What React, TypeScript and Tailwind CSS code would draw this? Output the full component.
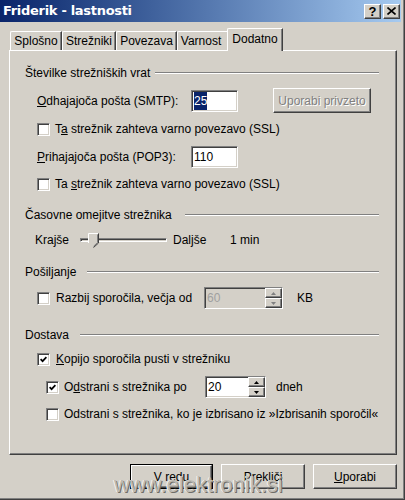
import React from "react";

const raised =
  "border border-t-white border-l-white border-r-[#404040] border-b-[#404040] shadow-[inset_-1px_-1px_0_#808080] bg-[#d4d0c8]";
const sunken =
  "border border-t-[#808080] border-l-[#808080] border-r-white border-b-white shadow-[inset_1px_1px_0_#404040,inset_-1px_-1px_0_#d4d0c8]";
const disabledText = "text-[#808080] [text-shadow:1px_1px_0_#ffffff]";

function Check({ checked }: { checked?: boolean }) {
  return (
    <span className={`w-[13px] h-[13px] shrink-0 bg-white flex items-center justify-center ${sunken}`}>
      {checked && (
        <svg width="7" height="7" viewBox="0 0 7 7">
          <polyline points="0.6,3.2 2.6,5.2 6.4,1.2" fill="none" stroke="#000" strokeWidth="1.7" />
        </svg>
      )}
    </span>
  );
}

function Arrow({ up, grey }: { up?: boolean; grey?: boolean }) {
  return (
    <svg width="5" height="3" viewBox="0 0 5 3">
      <polygon points={up ? "0,3 5,3 2.5,0" : "0,0 5,0 2.5,3"} fill={grey ? "#808080" : "#000"} />
    </svg>
  );
}

function Spin({ value, disabled, className }: { value: string; disabled?: boolean; className: string }) {
  return (
    <div className={`h-[22px] flex ${sunken} ${disabled ? "bg-[#d4d0c8]" : "bg-white"} ${className}`}>
      <span className={`flex-1 pl-[2px] flex items-center ${disabled ? "text-[#a0a0a0]" : ""}`}>{value}</span>
      <div className="w-[17px] flex flex-col">
        <span className={`flex-1 flex items-center justify-center ${raised}`}>
          <Arrow up grey={disabled} />
        </span>
        <span className={`flex-1 flex items-center justify-center ${raised}`}>
          <Arrow grey={disabled} />
        </span>
      </div>
    </div>
  );
}

function Group({ label, className }: { label: string; className: string }) {
  return (
    <div className="h-[20px] flex items-center">
      <div className={`whitespace-nowrap ${className}`}>{label}</div>
      <div className="flex-1 h-[2px] border-t border-t-[#808080] border-b border-b-white" />
    </div>
  );
}

export default function App() {
  return (
    <div className="w-[405px] h-[500px] bg-[#404040] pr-px pb-px relative overflow-hidden font-['Liberation_Sans',Arial,sans-serif] text-[12px] text-black">
      <div className="h-full bg-[#808080] pr-px pb-px">
        <div className="h-full bg-[#d4d0c8] pr-[2px] flex flex-col">
          {/* title bar */}
          <div className="h-[22px] flex items-center bg-linear-to-r from-[#0a246a] to-[#a6caf0] pl-[3px] pr-px">
            <span className="flex-1 text-white font-bold text-[13px] font-['DejaVu_Sans',sans-serif] tracking-[-0.3px]">
              Friderik - lastnosti
            </span>
            <span className={`w-[17px] h-[15px] flex items-center justify-center font-bold text-[13px] leading-none ${raised}`}>
              ?
            </span>
            <span className={`w-[17px] h-[15px] ml-[2px] flex items-center justify-center ${raised}`}>
              <svg width="9" height="8" viewBox="0 0 9 8">
                <path d="M0.5 0.5 L8.5 7.5 M8.5 0.5 L0.5 7.5" stroke="#000" strokeWidth="1.6" />
              </svg>
            </span>
          </div>

          {/* tabs */}
          <div className="mt-[6px] h-[22px] flex items-end pl-[10px]">
            <div className="w-[52px] h-[19px] flex items-center justify-center border-t border-l border-t-white border-l-white border-r border-r-[#404040] shadow-[inset_-1px_0_0_#808080] rounded-tl-[2px]">
              Splošno
            </div>
            <div className="w-[54px] h-[19px] flex items-center justify-center border-t border-l border-t-white border-l-white border-r border-r-[#404040] shadow-[inset_-1px_0_0_#808080] rounded-tl-[2px]">
              Strežniki
            </div>
            <div className="w-[61px] h-[19px] flex items-center justify-center border-t border-l border-t-white border-l-white border-r border-r-[#404040] shadow-[inset_-1px_0_0_#808080] rounded-tl-[2px]">
              Povezava
            </div>
            <div className="w-[52px] h-[19px] flex items-center justify-center border-t border-l border-t-white border-l-white border-r border-r-[#404040] shadow-[inset_-1px_0_0_#808080] rounded-tl-[2px] pr-[4px]">
              Varnost
            </div>
            <div className="relative z-10 w-[56px] -mx-[2px] h-[23px] -mb-px bg-[#d4d0c8] flex items-center justify-center pb-[2px] border-t border-l border-t-white border-l-white border-r border-r-[#404040] shadow-[inset_-1px_0_0_#808080] rounded-tl-[2px]">
              Dodatno
            </div>
          </div>

          {/* panel */}
          <div className="ml-[9px] w-[388px] h-[405px] border border-t-white border-l-white border-r-[#404040] border-b-[#404040] shadow-[inset_-1px_-1px_0_#808080] flex flex-col pt-[12px] pl-[15px] pr-[17px]">
            <Group label="Številke strežniških vrat" className="w-[130px]" />

            <div className="mt-[5px] h-[25px] flex items-center pl-[12px]">
              <span className="w-[154px] whitespace-nowrap">
                <span className="underline">O</span>dhajajoča pošta (SMTP):
              </span>
              <span className={`w-[47px] h-[22px] bg-white flex items-center pl-[2px] ${sunken}`}>
                <span className="bg-[#0a246a] text-white">25</span>
              </span>
              <span className={`ml-[35px] w-[98px] h-[25px] flex items-center justify-center ${raised} ${disabledText}`}>
                Uporabi privzeto
              </span>
            </div>

            <div className="mt-[7px] h-[18px] flex items-center pl-[12px] gap-[5px]">
              <Check />
              <span className="whitespace-nowrap">
                T<span className="underline">a</span> strežnik zahteva varno povezavo (SSL)
              </span>
            </div>

            <div className="mt-[8px] h-[22px] flex items-center pl-[12px]">
              <span className="w-[154px] whitespace-nowrap">
                <span className="underline">P</span>rihajajoča pošta (POP3):
              </span>
              <span className={`w-[47px] h-[22px] bg-white flex items-center pl-[2px] ${sunken}`}>110</span>
            </div>

            <div className="mt-[7px] h-[18px] flex items-center pl-[12px] gap-[5px]">
              <Check />
              <span className="whitespace-nowrap">
                Ta <span className="underline">s</span>trežnik zahteva varno povezavo (SSL)
              </span>
            </div>

            <div className="mt-[12px]">
              <Group label="Časovne omejitve strežnika" className="w-[160px]" />
            </div>

            <div className="mt-[5px] h-[20px] flex items-center pl-[10px]">
              <span className="w-[45px]">Krajše</span>
              <div className="relative w-[87px] h-[20px] flex items-center">
                <div className={`w-full h-[4px] bg-[#d4d0c8] ${sunken}`} />
                <svg className="absolute left-[8px] top-[3px]" width="11" height="15" viewBox="0 0 11 15">
                  <polygon points="0.5,0.5 10.5,0.5 10.5,10 5.5,14.5 0.5,10" fill="#d4d0c8" />
                  <polyline points="5.5,14.5 10.5,10 10.5,0.5" fill="none" stroke="#404040" />
                  <polyline points="5.5,13.3 9.5,9.6 9.5,1.5" fill="none" stroke="#808080" />
                  <polyline points="0.5,10 0.5,0.5 10,0.5" fill="none" stroke="#ffffff" />
                </svg>
              </div>
              <span className="ml-[6px] w-[57px]">Daljše</span>
              <span>1 min</span>
            </div>

            <div className="mt-[12px]">
              <Group label="Pošiljanje" className="w-[62px]" />
            </div>

            <div className="mt-[5px] h-[22px] flex items-center pl-[12px]">
              <span className="w-[167px] flex items-center gap-[6px] whitespace-nowrap">
                <Check />
                Razbij sporočila, večja od
              </span>
              <Spin value="60" disabled className="w-[79px]" />
              <span className="ml-[14px]">KB</span>
            </div>

            <div className="mt-[16px]">
              <Group label="Dostava" className="w-[55px]" />
            </div>

            <div className="mt-[5px] h-[18px] flex items-center pl-[12px] gap-[6px]">
              <Check checked />
              <span className="whitespace-nowrap">
                <span className="underline">K</span>opijo sporočila pusti v strežniku
              </span>
            </div>

            <div className="mt-[8px] h-[22px] flex items-center pl-[21px]">
              <span className="w-[159px] flex items-center gap-[5px] whitespace-nowrap">
                <Check checked />
                <span>
                  O<span className="underline">d</span>strani s strežnika po
                </span>
              </span>
              <Spin value="20" className="w-[61px]" />
              <span className="ml-[10px]">dneh</span>
            </div>

            <div className="mt-[7px] h-[18px] flex items-center pl-[21px] gap-[5px]">
              <Check />
              <span className="whitespace-nowrap">
                Odstrani s strežnika, ko je izbrisano iz »Izbrisanih sporočil«
              </span>
            </div>
          </div>

          {/* buttons */}
          <div className="mt-[9px] ml-[9px] w-[388px] flex justify-end gap-[8px]">
            <div className="w-[83px] h-[25px] border border-black">
              <div className={`h-full flex items-center justify-center ${raised}`}>V redu</div>
            </div>
            <div className={`w-[84px] h-[25px] flex items-center justify-center ${raised}`}>Prekliči</div>
            <div className={`w-[84px] h-[25px] flex items-center justify-center ${raised}`}>
              <span>
                <span className="underline">U</span>porabi
              </span>
            </div>
          </div>
        </div>
      </div>

      {/* watermark */}
      <div className="absolute left-[114px] top-[474px] text-[22px] leading-none text-[#bdbab3] [text-shadow:1px_1px_0_#6f6d68,-1px_0_0_#f4f3f0] pointer-events-none whitespace-nowrap">
        www.elektronik.si
      </div>
    </div>
  );
}
